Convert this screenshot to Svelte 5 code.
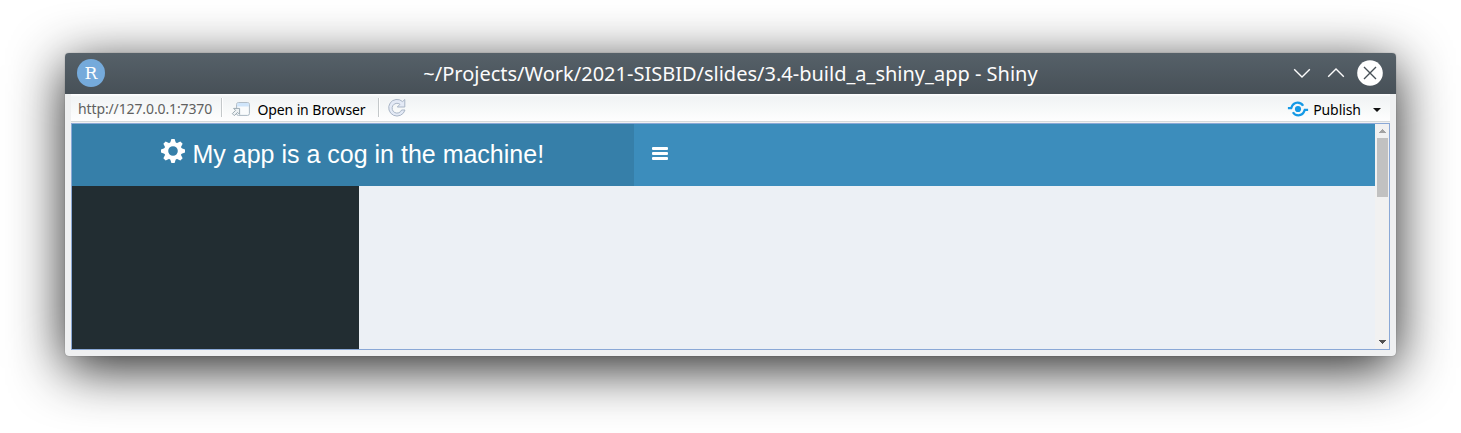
<script>
  const title = '~/Projects/Work/2021-SISBID/slides/3.4-build_a_shiny_app - Shiny';
  const address = 'http://127.0.0.1:7370';
  const teeth = [0, 45, 90, 135, 180, 225, 270, 315];
</script>

<main>
  <section class="window">
    <header class="titlebar">
      <div class="logo">R</div>
      <h1>{title}</h1>
      <div class="controls">
        <svg width="92" height="28" viewBox="0 0 92 28" fill="none">
          <path d="M3.2 10.3l7.8 7.7 7.8-7.7M37.2 17.7l7.8-7.7 7.8 7.7" stroke="#fcfcfc" stroke-width="1.4" />
          <circle cx="79" cy="14" r="12.8" fill="#fff" />
          <path d="M73 8l12 12M85 8l-12 12" stroke="#475057" stroke-width="1.4" />
        </svg>
      </div>
    </header>

    <div class="body">
      <nav class="toolbar">
        <span class="address">{address}</span>
        <i class="sep"></i>
        <button class="open">
          <svg width="20" height="16" viewBox="0 0 20 16">
            <rect x="5.6" y="1.6" width="12.8" height="12.8" rx="1.8" fill="#f9fbfc" stroke="#a9b7c2" />
            <path d="M6.1 5.5V3.4q0-1.3 1.3-1.3h9.2q1.3 0 1.3 1.3v2.1z" fill="#cfe5fb" />
            <path d="M2.6 7.4h6v6l-2-2-3.3 3.2-2-2 3.3-3.2z" fill="#eef2f4" stroke="#9caab2" />
          </svg>
          <span>Open in Browser</span>
        </button>
        <i class="sep"></i>
        <svg class="reload" width="20" height="20" viewBox="0 0 20 20">
          <path d="M15.6 3.6L17.8 1.5V9H10.3L13 6.3A4.9 4.9 0 1 0 14.6 12H18A8.3 8.3 0 1 1 15.6 3.6z" fill="#e4eaf6" stroke="#a9b5c6" />
        </svg>
        <button class="publish">
          <svg width="22" height="18" viewBox="0 0 22 18" fill="none">
            <circle cx="11" cy="9" r="3.1" fill="#1599e6" />
            <path d="M.9 8.1h3.3C5.5 4.2 7.6 2.7 10.6 2.7c2.5 0 4.3 1 5.5 3.1M21.1 9.9h-3.3c-1.3 3.9-3.4 5.4-6.4 5.4-2.5 0-4.3-1-5.5-3.1" stroke="#1599e6" stroke-width="2.3" />
          </svg>
          <span>Publish</span>
          <i class="caret"></i>
        </button>
      </nav>

      <div class="viewer">
        <div class="page">
          <header class="navbar">
            <div class="brand">
              <svg width="24" height="24" viewBox="-12 -12 24 24" fill="#fff">
                {#each teeth as angle}
                  <path d="M-2.9-8L-1.6-12H1.6L2.9-8z" transform="rotate({angle})" />
                {/each}
                <circle r="6.9" fill="none" stroke="#fff" stroke-width="4.2" />
              </svg>
              <span>My app is a cog in the machine!</span>
            </div>
            <button class="toggle" aria-label="Toggle navigation"><i></i><i></i><i></i></button>
          </header>
          <div class="content">
            <aside></aside>
            <article></article>
          </div>
        </div>
        <div class="scrollbar">
          <svg width="14" height="14" viewBox="0 0 14 14" shape-rendering="crispEdges"><path d="M7 5l4 4H3z" fill="#a3a3a3" /></svg>
          <div class="thumb"></div>
          <svg width="14" height="14" viewBox="0 0 14 14" shape-rendering="crispEdges"><path d="M3 5h8L7 9z" fill="#505050" /></svg>
        </div>
      </div>
    </div>
  </section>
</main>

<style>
  :global(body) { margin: 0; background: #fff; }
  main { box-sizing: border-box; width: 1461px; height: 433px; padding: 53px 65px 77px; overflow: hidden; }
  .window {
    display: flex; flex-direction: column; height: 303px; border-radius: 4px;
    background: #eff0f1; box-shadow: 0 12px 54px rgba(0, 0, 0, .87), 0 0 1px rgba(0, 0, 0, .5);
  }
  .titlebar {
    display: grid; grid-template-columns: 120px 1fr 120px; align-items: center; height: 41px;
    border-radius: 4px 4px 0 0; background: linear-gradient(#566169, #475057); box-sizing: border-box;
  }
  .logo {
    width: 28px; height: 28px; margin: -1px 0 0 12px; border-radius: 50%; background: #75aadb;
    color: #fff; font: 17px/28px "DejaVu Serif", serif; text-align: center;
  }
  h1 { margin: 0; font: 400 20px/40px "Noto Sans", sans-serif; color: #fcfcfc; text-align: center; white-space: nowrap; }
  .controls { display: flex; justify-content: flex-end; padding-right: 13px; margin-top: -1px; }
  .body { display: flex; flex-direction: column; flex: 1; padding: 0 6px 6px; min-height: 0; }
  .toolbar {
    display: flex; align-items: center; height: 28px; margin-bottom: 1px; box-sizing: border-box; padding: 3px 9.5px 0 7px;
    border-bottom: 1px solid #d6dadc; background: linear-gradient(#fff 0, #f0f3f4 3px, #fefefe 27px);
    font: 14px/24px "Noto Sans", sans-serif; color: #000;
  }
  button { display: flex; align-items: center; margin: 0; padding: 0; border: 0; background: none; font: inherit; color: inherit; white-space: nowrap; }
  svg { display: block; flex: none; }
  .address { width: 143px; color: #606060; letter-spacing: -.12px; white-space: nowrap; }
  .sep { width: 1px; height: 19px; margin-top: -4px; background: #c4c8ca; border-right: 1px solid #fff; }
  .open { width: 155px; padding-left: 8px; box-sizing: border-box; gap: 6.5px; letter-spacing: -.12px; }
  .open span, .publish span { padding-top: 2px; }
  .open svg, .publish svg { margin-top: -1px; }
  .reload { margin: -2px 0 0 7px; }
  .publish { margin-left: auto; gap: 4.6px; letter-spacing: -.08px; }
  .caret { width: 0; height: 0; margin: 1px 0 0 7px; border: 4px solid transparent; border-top-color: #111; border-bottom: 0; }
  .viewer { display: flex; flex: 1; min-height: 0; border: 1px solid #8aa8d6; }
  .page { display: flex; flex-direction: column; flex: 1; }
  .navbar { display: flex; height: 62px; background: #3c8dbc; }
  .brand {
    display: flex; align-items: center; width: 562px; box-sizing: border-box; padding-left: 89px; gap: 7.5px;
    background: #367fa9; color: #fff; font: 25px/60px "Liberation Sans", Arial, sans-serif; white-space: nowrap;
  }
  .brand span { margin-top: -2px; }
  .brand svg { margin-top: -8px; }
  .toggle { flex-direction: column; align-items: flex-start; justify-content: center; gap: 2px; padding: 0 0 4px 18px; }
  .toggle i { width: 16px; height: 3px; background: #fff; border-radius: 1px; }
  .content { display: flex; flex: 1; }
  aside { width: 287px; background: #222d32; }
  article { flex: 1; background: #ecf0f5; }
  .scrollbar { display: flex; flex-direction: column; width: 14px; background: #f1f1f1; }
  .thumb { width: 11px; height: 59px; margin: 0 auto auto 2px; background: #c1c1c1; }
</style>
